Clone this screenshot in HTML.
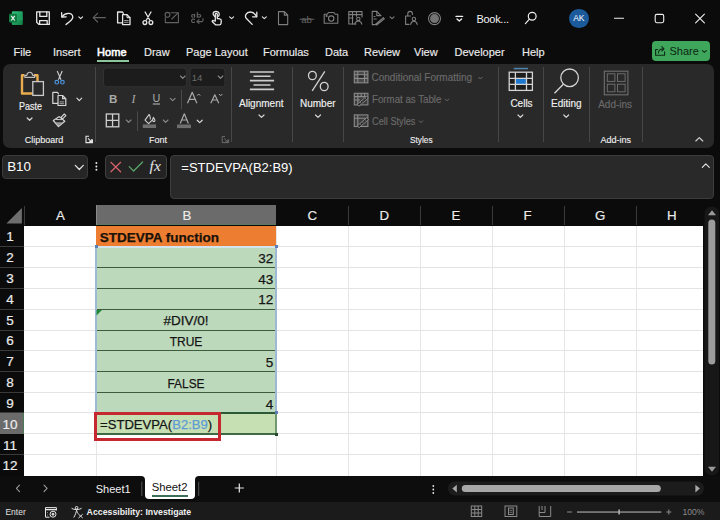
<!DOCTYPE html>
<html><head><meta charset="utf-8">
<style>
*{margin:0;padding:0;box-sizing:border-box}
html,body{width:720px;height:520px;overflow:hidden;background:#0b0b0b;font-family:"Liberation Sans",sans-serif;color:#fff}
.a{position:absolute}
.t{position:absolute;white-space:nowrap;line-height:1}
svg{position:absolute;overflow:visible}
#ribbon{left:3px;top:64px;width:711px;height:84px;background:#292929;border-radius:7px}
.sep{position:absolute;width:1px;background:#474747}
.tab{font-size:11px;color:#ececec;top:47px;-webkit-text-stroke:0.15px currentColor}
.lbl{font-size:10px;color:#f0f0f0;-webkit-text-stroke:0.15px currentColor}
.glb{font-size:9px;color:#f0f0f0;-webkit-text-stroke:0.12px currentColor}
.dim{color:#6b6b6b}
.ch{position:absolute;top:209.2px;font-size:13.3px;color:#ececec;line-height:1;-webkit-text-stroke:0.15px currentColor}
.rh{position:absolute;font-size:13.5px;color:#ececec;line-height:1;-webkit-text-stroke:0.2px currentColor}
.hsep{position:absolute;top:206px;height:19px;width:1px;background:#3a3a3a}
.gl{position:absolute;height:1px;background:#e4e4e4}
.vg{position:absolute;width:1px;background:#e6e6e6;top:226px;height:250px}
.rsep{position:absolute;left:0;width:24px;height:1px;background:#3a3a3a}
.cell{position:absolute;font-size:13.5px;color:#141414;line-height:1;white-space:nowrap;-webkit-text-stroke:0.25px currentColor}
.gline{position:absolute;left:96px;width:180px;height:1px;background:#3d5c3d}
</style></head><body>

<!-- ===== title bar ===== -->
<svg style="left:0;top:0" width="720" height="40" viewBox="0 0 720 40">
<defs><linearGradient id="xg" x1="0" y1="0" x2="1" y2="1"><stop offset="0" stop-color="#33c481"/><stop offset="1" stop-color="#107c41"/></linearGradient></defs>
<!-- excel logo -->
<rect x="11.8" y="11.3" width="11" height="13.6" rx="1.2" fill="url(#xg)"/>
<rect x="11.8" y="16.5" width="11" height="3.5" fill="#21a366" opacity="0.6"/>
<rect x="9" y="13.8" width="8" height="8.7" rx="1" fill="#107c41"/>
<path d="M11.2 15.8 L14.8 20.5 M14.8 15.8 L11.2 20.5" stroke="#e8f5ee" stroke-width="1.2"/>
<g fill="none" stroke="#e8e8e8" stroke-width="1.3" stroke-linejoin="round" stroke-linecap="round">
<!-- save -->
<path d="M36.7 11.9 H49.3 V24.4 H38.8 L36.7 22.3 Z"/>
<path d="M39.8 12 V16.4 H46.8 V12"/>
<path d="M39.6 24.3 V20.6 H47.2 V24.3"/>
<!-- undo -->
<path d="M61.8 17 L61.6 12.6 M61.8 17 L66.2 16.8"/>
<path d="M62 16.8 C64.5 13 72.8 11.5 72.8 17.2 C72.8 19.5 70 21.5 66 24.5"/>
<path d="M78.8 16.8 L80.7 18.6 L82.6 16.8" stroke-width="1.1"/>
<!-- copy -->
<path d="M122.3 22.9 H117.6 V12 H122.5 L123.3 13.4"/>
<path d="M122.6 14.7 H127 L130 17.7 V24.6 H122.6 Z"/>
<path d="M127 14.7 V17.7 H130" stroke-width="1"/>
<path d="M124.5 20.5 H128.2 M124.5 22.3 H128.2" stroke="#9a9a9a" stroke-width="1"/>
<!-- scissors -->
<path d="M145.1 12 L149.7 20 M151 12 L146.4 20"/>
<circle cx="144.9" cy="22.6" r="1.9"/>
<circle cx="150.9" cy="22.6" r="1.9"/>
<!-- hand -->
<path d="M214.5 16.2 C212 14 213 11.5 216 11.5 C219.2 11.5 220 14 218.6 16.2"/>
<path d="M215.3 21 V14.3 C215.3 13 217.3 13 217.3 14.3 V18.5 L219.8 18.8 C221 19 221.4 19.8 221.3 21 L221 23.6 C220.8 24.5 220.2 24.8 219.4 24.8 H215.5 L212.4 21.8 C211.8 21 212.6 20 213.5 20.6 Z"/>
<path d="M229.6 16.8 L231.6 18.6 L233.6 16.8" stroke-width="1.1"/>
<!-- redo -->
<path d="M252.2 24.4 L246.2 18.3 C244.5 16.3 246 12 250.3 12 C253 12 255 13.8 256.5 16.5"/>
<path d="M256.8 12.2 V16.8 H252.6"/>
<path d="M262.3 16.8 L264.3 18.6 L266.3 16.8" stroke-width="1.1"/>
<!-- customize -->
<path d="M456 16.4 H462.6" stroke="#f0f0f0"/>
<path d="M457 19 L459.3 21 L461.6 19" stroke="#f0f0f0"/>
<!-- search -->
<circle cx="532.2" cy="16.3" r="3.9" stroke="#f0f0f0" stroke-width="1.2"/>
<path d="M529.4 19.2 L525.4 23.6" stroke="#f0f0f0" stroke-width="1.2"/>
<!-- window controls -->
<path d="M614.5 18.2 H623.5" stroke="#f0f0f0" stroke-width="1.1"/>
<rect x="655.2" y="14.4" width="8.5" height="8.3" rx="1.6" stroke="#f0f0f0" stroke-width="1.1"/>
<path d="M695.6 14.2 L704.4 22.8 M704.4 14.2 L695.6 22.8" stroke="#f0f0f0" stroke-width="1.1"/>
</g>
<g fill="none" stroke="#626262" stroke-width="1.1" stroke-linejoin="round" stroke-linecap="round">
<!-- back arrow -->
<path d="M93.2 17.6 H105.4 M97.6 13.3 L93.2 17.6 L97.6 22"/>
<!-- mail -->
<path d="M171 12.7 H178.4 V22.6 H165.3 V17.5"/>
<path d="M171.8 19 L177.8 13.2"/>
<circle cx="167.5" cy="14.8" r="2.4"/>
<!-- abc -->
<path d="M193 17.1 C191.2 17.3 191.2 14.6 193 14.5 C194.4 14.5 194.6 15.3 194.6 16 V17.3 M194.6 15.7 V14.2"/>
<path d="M197.3 12.4 V17.3 M197.3 15.8 C197.5 14 200.8 14 200.8 15.8 C200.8 17.6 197.5 17.6 197.3 15.8"/>
<path d="M194.6 19.5 C193.5 18.6 191.6 19 191.6 20.8 C191.6 22.6 193.5 23 194.6 22"/>
<path d="M203 18.5 V20.2 C203 21 202.4 21.6 201.6 21.6 H197 M199 19.6 L196.9 21.6 L199 23.4"/>
<!-- strikethrough -->
<path d="M300 19.3 H313.9"/>
</g>
<g fill="none" stroke="#7e7e7e" stroke-width="1.1" stroke-linejoin="round" stroke-linecap="round">
<!-- new doc -->
<path d="M278.5 11.6 H284.4 L287.7 15 V24.6 H278.5 Z M284.3 11.8 V15.1 H287.5"/>
<!-- camera -->
<path d="M324.2 14.3 H327 L328.6 12.5 H333.8 L335.4 14.3 H337.8 V23.2 H324.2 Z"/>
<circle cx="331.2" cy="18.6" r="2.7"/>
<circle cx="326.6" cy="16" r="0.5" fill="#8e8e8e"/>
<!-- grid person -->
<path d="M356 24 H348.8 V11.6 H362 V17"/>
<path d="M348.8 14.6 H362 M352.5 11.6 V24 M348.8 18 H353 M356.5 11.6 V16.3"/>
<circle cx="358.3" cy="18.9" r="1.7"/>
<path d="M354.8 24.2 C355.3 22 356.5 21 358.3 21 C360.1 21 361.4 22 361.8 24.2"/>
<!-- doc pen -->
<path d="M372.2 11.4 H376.8 L380.8 15.6 M372.2 11.4 V24.6 H375"/>
<path d="M376.8 11.4 V15.6 H380.8"/>
<path d="M375.4 24.5 L383.3 17.7 L384.3 18.8 L376.6 25 Z"/>
<path d="M374.1 16.5 H375 M374 19 H376.3" />
<path d="M390 16.8 L392 18.6 L394 16.8" stroke-width="1.1"/>
<!-- lock person -->
<path d="M407.8 15.7 V13.8 C407.8 10.6 412.4 10.6 412.4 13.8 V14.6"/>
<path d="M409 24.4 H405.6 V16 H410.5"/>
<circle cx="413.9" cy="19" r="1.7"/>
<path d="M410.7 24.4 C411 22.3 412.2 21.3 413.9 21.3 C415.6 21.3 416.8 22.3 417.2 24.4"/>
<!-- record circle -->
<circle cx="434.5" cy="18.6" r="6"/>
</g>
<circle cx="434.5" cy="18.6" r="4.5" fill="#737373"/>
<text x="301.2" y="22.5" font-family="Liberation Sans" font-size="9.6" fill="#666">ab</text>
</svg>

<div class="t" style="left:476.5px;top:14px;font-size:11px;color:#f2f2f2;letter-spacing:-0.3px">Book...</div>
<div class="a" style="left:569px;top:8.5px;width:19.5px;height:19.5px;border-radius:50%;background:#1b5a9b"></div>
<div class="t" style="left:573.2px;top:14.3px;font-size:8.5px;color:#fff">AK</div>

<!-- ===== tabs ===== -->
<div class="t tab" style="left:13.5px">File</div>
<div class="t tab" style="left:53px">Insert</div>
<div class="t tab" style="left:97px;color:#fff;-webkit-text-stroke:0.55px #fff;letter-spacing:0.1px">Home</div>
<div class="a" style="left:97px;top:59.5px;width:32px;height:2px;background:#8dc59c"></div>
<div class="t tab" style="left:144px">Draw</div>
<div class="t tab" style="left:186px">Page Layout</div>
<div class="t tab" style="left:263px">Formulas</div>
<div class="t tab" style="left:325px">Data</div>
<div class="t tab" style="left:364px">Review</div>
<div class="t tab" style="left:414px">View</div>
<div class="t tab" style="left:454.5px">Developer</div>
<div class="t tab" style="left:522px">Help</div>
<div class="a" style="left:652px;top:41px;width:58px;height:19.5px;background:#3fa75b;border-radius:4px"></div>
<div class="t" style="left:669.5px;top:45.7px;font-size:11px;color:#0b2513">Share</div>

<!-- ===== ribbon ===== -->
<div class="a" id="ribbon"></div>
<div class="sep" style="left:95px;top:67px;height:75px"></div>
<div class="sep" style="left:231px;top:67px;height:75px"></div>
<div class="sep" style="left:292px;top:67px;height:75px"></div>
<div class="sep" style="left:343px;top:67px;height:75px"></div>
<div class="sep" style="left:498px;top:67px;height:75px"></div>
<div class="sep" style="left:543px;top:67px;height:75px"></div>
<div class="sep" style="left:589px;top:67px;height:75px"></div>
<div class="sep" style="left:642px;top:67px;height:75px"></div>

<svg style="left:0;top:60px" width="720" height="90" viewBox="0 60 720 90">
<!-- paste clipboard -->
<path d="M24.5 75.2 H22 V93.5 H33" fill="none" stroke="#e9ac4f" stroke-width="2.4" stroke-linejoin="round"/>
<path d="M34 75.2 H37.5 V81" fill="none" stroke="#e9ac4f" stroke-width="2.4" stroke-linejoin="round"/>
<path d="M24.8 77.3 V75.3 H26.8 C27.3 71.2 32.2 71.2 32.7 75.3 H34.7 V77.3 Z" fill="none" stroke="#bdbdbd" stroke-width="1.2" stroke-linejoin="round"/>
<rect x="32.8" y="81.6" width="10.6" height="13.8" fill="#292929" stroke="#c9c9c9" stroke-width="1.3"/>
<!-- scissors -->
<path d="M57.2 71 L61 79.8 M62.2 71 L58.4 79.8" stroke="#d0d0d0" stroke-width="1.1" fill="none"/>
<circle cx="56.8" cy="82.2" r="1.8" fill="none" stroke="#4c94dc" stroke-width="1.2"/>
<circle cx="62.4" cy="82.2" r="1.8" fill="none" stroke="#4c94dc" stroke-width="1.2"/>
<g fill="none" stroke="#d6d6d6" stroke-width="1.2" stroke-linejoin="round" stroke-linecap="round">
<!-- copy -->
<path d="M57.6 103.4 H52.8 V92.4 H57.5 L58.5 93.8"/>
<path d="M58 95.5 H62.6 L65.8 98.7 V105.5 H58 Z M62.6 95.5 V98.7 H65.8"/>
<path d="M60 101.8 H63.6 M60 103.6 H63.6" stroke="#8a8a8a"/>
<!-- format painter -->
<path d="M64.3 114 L65.9 115.6 L62.6 118.9 L61 117.3 Z" stroke-width="1.1"/>
<path d="M53.3 120.5 L59.3 116.6 L64.8 121.3 L58.5 126.5 Z"/>
<path d="M55.3 122.2 L58.6 125.6 L62.6 122.2 Z" fill="#9a9a9a" stroke="none"/>
<path d="M56.3 119.5 L61.8 119.6" stroke-width="0.9"/>
<!-- chevrons (bright) -->
<path d="M27.2 118 L29.6 120.3 L32 118"/>
<path d="M76.9 98.2 L79.3 100.6 L81.7 98.2"/>
<path d="M197.2 120.2 L199.7 122.6 L202.2 120.2"/>
<path d="M259 115 L261.5 117.4 L264 115"/>
<path d="M315.5 115 L318 117.4 L320.5 115"/>
<path d="M518 115 L520.4 117.4 L522.8 115"/>
<path d="M563.8 115 L566.2 117.4 L568.6 115"/>
<path d="M695.8 141 L699.3 137.6 L702.8 141" stroke-width="1.1"/>
</g>
<!-- clipboard dialog launcher -->
<g fill="none" stroke="#e6e6e6" stroke-width="1.1">
<path d="M89 136.3 H86 V142.6 H92.4 V139.6"/>
<path d="M88 138.3 L91.6 141.8 M91.8 139 V141.8 H89"/>
</g>
<!-- font boxes -->
<rect x="103.5" y="68" width="83.2" height="18.8" rx="3" fill="#1c1c1c" stroke="#333" stroke-width="1"/>
<rect x="190" y="68" width="35" height="18.8" rx="3" fill="#1c1c1c" stroke="#333" stroke-width="1"/>
<g fill="none" stroke="#8a8a8a" stroke-width="1.1" stroke-linejoin="round" stroke-linecap="round">
<path d="M180.5 76 L182.8 78.3 L185.1 76"/>
<path d="M218.2 76 L220.5 78.3 L222.8 76"/>
<path d="M170.3 98.3 L172.7 100.7 L175.1 98.3"/>
<path d="M126.3 120 L128.6 122.4 L131 120"/>
<path d="M163.3 120 L165.6 122.4 L168 120"/>
</g>
<text x="191.8" y="81" font-family="Liberation Sans" font-size="9.5" fill="#6c6c6c">14</text>
<!-- B I U -->
<text x="109" y="102.7" font-family="Liberation Sans" font-weight="bold" font-size="11.6" fill="#a9a9a9">B</text>
<text x="131.6" y="102.7" font-family="Liberation Serif" font-style="italic" font-size="12" fill="#a9a9a9">I</text>
<text x="152.6" y="102" font-family="Liberation Sans" font-size="10.8" fill="#a9a9a9">U</text>
<path d="M152.8 104 H160" stroke="#a9a9a9" stroke-width="1.2"/>
<!-- separators small -->
<rect x="181" y="89.5" width="1" height="19.7" fill="#4a4a4a"/>
<rect x="137" y="111.3" width="1" height="19.7" fill="#4a4a4a"/>
<!-- grow / shrink font -->
<g fill="none" stroke="#a9a9a9" stroke-width="1.2" stroke-linejoin="round">
<path d="M187.5 103.3 L192.2 92.3 L196.9 103.3 M189.2 99.4 H195.2"/>
<path d="M197.2 95.6 L198.7 94 L200.2 95.6" stroke-width="1"/>
<path d="M210.8 103.3 L214.8 94.8 L218.8 103.3 M212.2 100 H217.4"/>
<path d="M219 94 L220.7 95.8 L222.4 94" stroke-width="1"/>
<!-- font color A -->
<path d="M180.2 123.4 L184.3 113.8 L188.4 123.4 M181.7 120 H186.9"/>
</g>
<rect x="177" y="124.5" width="14" height="3.6" fill="#6e6e6e"/>
<!-- borders grid -->
<g fill="none" stroke="#cfcfcf" stroke-width="1.3">
<rect x="106.3" y="114" width="12.5" height="12.8"/>
<path d="M112.55 114 V126.8 M106.3 120.4 H118.8"/>
</g>
<!-- fill bucket -->
<g fill="none" stroke="#cfcfcf" stroke-width="1.1" stroke-linejoin="round">
<path d="M149.2 114.4 L145 120.1 L148.6 123.7 L153 119.4"/>
<path d="M149.2 114.4 C150 115.5 150.4 117.5 150.4 119.6"/>
<path d="M153.3 117.4 C152.5 119 152.3 121.6 153.9 121.8 C155.4 121.8 155.2 119 153.3 117.4Z"/>
</g>
<rect x="142.8" y="124.4" width="13.3" height="3.6" fill="#6e6e6e"/>
<!-- font dialog launcher dim -->
<g fill="none" stroke="#6a6a6a" stroke-width="1">
<path d="M225 136.5 H222.2 V142.6 H228.6 V139.8"/>
<path d="M224.2 138.5 L227.8 142 M228 139.2 V142 H225.2"/>
</g>
<!-- alignment -->
<g stroke="#cdcdcd" stroke-width="1.6">
<path d="M249.9 72 H274.1 M253.5 76.3 H270.5 M249.9 80.6 H274.1 M253.5 85 H270.5 M249.9 89.4 H274.1"/>
</g>
<!-- percent -->
<g fill="none" stroke="#d2d2d2" stroke-width="1.3">
<ellipse cx="312.4" cy="75.5" rx="3.9" ry="4.2"/>
<ellipse cx="324.2" cy="86.5" rx="3.9" ry="4.2"/>
<path d="M324.8 71.3 L312.2 90.8"/>
</g>
<!-- styles icons (dim) -->
<g fill="none" stroke="#8a8a8a" stroke-width="1.1">
<rect x="354.3" y="71.2" width="13.6" height="11.6" fill="#4a4a4a"/>
<rect x="357.8" y="74.8" width="6.6" height="3.6" fill="#1e1e1e" stroke="none"/>
<path d="M354.3 74.8 H367.9 M354.3 78.4 H367.9 M357.8 71.2 V82.8 M364.4 71.2 V82.8"/>
<rect x="354.3" y="93.3" width="13.6" height="11.6" fill="#3c3c3c"/>
<path d="M354.3 96.6 H367.9 M357.8 93.3 V104.9 M361.2 93.3 V97 M364.6 93.3 V97 M354.3 100 H360" />
<path d="M357.2 104.4 L366.6 96.1 L368.4 98 L359.2 106 Z" fill="#262626" stroke-width="1"/>
<path d="M360 103 L361 102.2 M362.4 101 L363.4 100.2 M364.8 99 L365.8 98.2" stroke-width="0.9"/>
<rect x="354.3" y="114.9" width="13.6" height="11.6" fill="#3c3c3c"/>
<path d="M354.3 118.2 H367.9 M357.8 114.9 V126.5"/>
<path d="M357.2 126 L366.6 117.7 L368.4 119.6 L359.2 127.6 Z" fill="#262626" stroke-width="1"/>
<path d="M360 124.6 L361 123.8 M362.4 122.6 L363.4 121.8 M364.8 120.6 L365.8 119.8" stroke-width="0.9"/>
</g>
<g fill="none" stroke="#6e6e6e" stroke-width="1" stroke-linejoin="round">
<path d="M478.4 77 L480.4 79 L482.4 77"/>
<path d="M445 98.8 L447 100.8 L449 98.8"/>
<path d="M419 120.6 L421 122.6 L423 120.6"/>
</g>
<!-- cells -->
<rect x="513.8" y="67.8" width="14.2" height="1.5" fill="#4f86b0"/>
<rect x="509.2" y="72.2" width="23.2" height="18.2" fill="#1d1d1d"/>
<rect x="515.4" y="78.3" width="11.1" height="6" fill="#1d78cf"/>
<g fill="none" stroke="#d4d4d4" stroke-width="1.3">
<rect x="509.2" y="72.2" width="23.2" height="18.2"/>
<path d="M515.4 72.2 V90.4 M526.5 72.2 V90.4 M509.2 78.3 H532.4 M509.2 84.3 H532.4"/>
</g>
<!-- editing magnifier -->
<g fill="none" stroke="#d4d4d4" stroke-width="1.3">
<circle cx="569.6" cy="77.8" r="8.8"/>
<path d="M563.3 84.3 L554.5 93.2"/>
</g>
<!-- add-ins -->
<g fill="none" stroke="#6f6f6f" stroke-width="1.1">
<rect x="604.3" y="71.2" width="23.6" height="23.6"/>
<rect x="607.3" y="73.8" width="7.6" height="7.6" stroke-width="0.95"/>
<rect x="617.5" y="73.8" width="7.6" height="7.6" stroke-width="0.95"/>
<rect x="607.3" y="84.2" width="7.6" height="7.6" stroke-width="0.95"/>
<rect x="617.5" y="84.2" width="7.6" height="7.6" stroke-width="0.95"/>
</g>
</svg>

<div class="t lbl" style="left:18.75px;top:102px;transform:scaleX(0.9);transform-origin:0 0">Paste</div>
<div class="t glb" style="left:24.7px;top:135.6px">Clipboard</div>
<div class="t glb" style="left:148.9px;top:135.6px">Font</div>
<div class="t lbl" style="left:239px;top:99.3px">Alignment</div>
<div class="t lbl" style="left:300px;top:99.3px">Number</div>
<div class="t lbl dim" style="left:371.5px;top:73px">Conditional Formatting</div>
<div class="t lbl dim" style="left:371.5px;top:95px;transform:scaleX(0.97);transform-origin:0 0">Format as Table</div>
<div class="t lbl dim" style="left:371.5px;top:116.6px;transform:scaleX(0.92);transform-origin:0 0">Cell Styles</div>
<div class="t glb" style="left:409.7px;top:135.6px;transform:scaleX(0.92);transform-origin:0 0">Styles</div>
<div class="t lbl" style="left:510.4px;top:98.8px">Cells</div>
<div class="t lbl" style="left:551px;top:98.8px">Editing</div>
<div class="t lbl dim" style="left:598.2px;top:100.2px">Add-ins</div>
<div class="t glb" style="left:600.4px;top:135.6px">Add-ins</div>

<!-- ===== formula bar ===== -->
<div class="a" style="left:2px;top:155px;width:86px;height:24px;background:#262626;border:1px solid #3a3a3a;border-radius:4px"></div>
<div class="t" style="left:7.2px;top:160.2px;font-size:13.4px;color:#fff">B10</div>
<div class="a" style="left:105px;top:155px;width:62px;height:24px;background:#232323;border:1px solid #404040;border-radius:4px"></div>
<div class="a" style="left:170px;top:155px;width:544px;height:44px;background:#292929;border:1px solid #3d3d3d;border-radius:4px"></div>
<div class="t" style="left:181.3px;top:161.4px;font-size:13px;color:#fff">=STDEVPA(B2:B9)</div>
<svg style="left:0;top:150px" width="720" height="55" viewBox="0 150 720 55">
<g fill="none" stroke-linecap="round" stroke-linejoin="round">
<path d="M75.3 165.3 L79.3 169.5 L83.3 165.3" stroke="#e6e6e6" stroke-width="1.2"/>
<path d="M110.9 162.3 L120.6 171.8 M120.6 162.3 L110.9 171.8" stroke="#d9636a" stroke-width="1.2"/>
<path d="M129.2 166.6 L133.6 171 L142.6 162" stroke="#5aa86a" stroke-width="1.2"/>
<path d="M702.3 167.4 L705.8 163.8 L709.3 167.4" stroke="#e6e6e6" stroke-width="1.1"/>
</g>
<circle cx="96.4" cy="163.1" r="1" fill="#e6e6e6"/>
<circle cx="96.4" cy="166.4" r="1" fill="#e6e6e6"/>
<circle cx="96.4" cy="169.8" r="1" fill="#e6e6e6"/>
<text x="149.6" y="171" font-family="Liberation Serif" font-style="italic" font-size="15.5" fill="#e6e6e6">fx</text>
</svg>


<!-- ===== headers ===== -->
<div class="a" style="left:96px;top:205px;width:180px;height:20px;background:#6b6b6b"></div>
<div class="a" style="left:96px;top:224.3px;width:180px;height:1px;background:#5d7a60"></div>
<div class="a" style="left:96px;top:205px;width:1px;height:20px;background:#8a8a8a"></div>
<div class="hsep" style="left:24px"></div>
<svg style="left:0;top:200px" width="30" height="30" viewBox="0 200 30 30"><path d="M6.4 223.5 H21.9 V208 Z" fill="#6e6e6e"/></svg>
<div class="hsep" style="left:348px"></div>
<div class="hsep" style="left:420px"></div>
<div class="hsep" style="left:492px"></div>
<div class="hsep" style="left:564px"></div>
<div class="hsep" style="left:636px"></div>
<div class="ch" style="left:56px">A</div>
<div class="ch" style="left:182.6px">B</div>
<div class="ch" style="left:307.5px">C</div>
<div class="ch" style="left:379.5px">D</div>
<div class="ch" style="left:451.5px">E</div>
<div class="ch" style="left:523.5px">F</div>
<div class="ch" style="left:595px">G</div>
<div class="ch" style="left:667px">H</div>

<!-- ===== grid ===== -->
<div class="a" style="left:24px;top:226px;width:679px;height:250px;background:#fff"></div>
<div class="gl" style="left:24px;top:246px;width:679px"></div>
<div class="gl" style="left:24px;top:267px;width:679px"></div>
<div class="gl" style="left:24px;top:288px;width:679px"></div>
<div class="gl" style="left:24px;top:309px;width:679px"></div>
<div class="gl" style="left:24px;top:330px;width:679px"></div>
<div class="gl" style="left:24px;top:350px;width:679px"></div>
<div class="gl" style="left:24px;top:371px;width:679px"></div>
<div class="gl" style="left:24px;top:392px;width:679px"></div>
<div class="gl" style="left:24px;top:412px;width:679px"></div>
<div class="gl" style="left:24px;top:433px;width:679px"></div>
<div class="gl" style="left:24px;top:454px;width:679px"></div>
<div class="vg" style="left:96px"></div>
<div class="vg" style="left:276px"></div>
<div class="vg" style="left:348px"></div>
<div class="vg" style="left:420px"></div>
<div class="vg" style="left:492px"></div>
<div class="vg" style="left:564px"></div>
<div class="vg" style="left:636px"></div>
<div class="rsep" style="top:246px"></div>
<div class="rsep" style="top:267px"></div>
<div class="rsep" style="top:288px"></div>
<div class="rsep" style="top:309px"></div>
<div class="rsep" style="top:330px"></div>
<div class="rsep" style="top:350px"></div>
<div class="rsep" style="top:371px"></div>
<div class="rsep" style="top:392px"></div>
<div class="rsep" style="top:412px"></div>
<div class="rsep" style="top:433px"></div>
<div class="rsep" style="top:454px"></div>
<div class="a" style="left:0;top:412.5px;width:24px;height:21px;background:#6b6b6b"></div>
<div class="a" style="left:23px;top:412.5px;width:1px;height:21px;background:#4a7a55"></div>
<div class="rh" style="left:0;width:20px;text-align:center;top:230.3px">1</div>
<div class="rh" style="left:0;width:20px;text-align:center;top:251.1px">2</div>
<div class="rh" style="left:0;width:20px;text-align:center;top:271.9px">3</div>
<div class="rh" style="left:0;width:20px;text-align:center;top:292.8px">4</div>
<div class="rh" style="left:0;width:20px;text-align:center;top:313.6px">5</div>
<div class="rh" style="left:0;width:20px;text-align:center;top:334.4px">6</div>
<div class="rh" style="left:0;width:20px;text-align:center;top:355.2px">7</div>
<div class="rh" style="left:0;width:20px;text-align:center;top:376.1px">8</div>
<div class="rh" style="left:0;width:20px;text-align:center;top:396.9px">9</div>
<div class="rh" style="left:0;width:20px;text-align:center;top:417.7px">10</div>
<div class="rh" style="left:0;width:20px;text-align:center;top:438.6px">11</div>
<div class="rh" style="left:0;width:20px;text-align:center;top:459.4px">12</div>
<div class="a" style="left:96px;top:226px;width:180px;height:20.3px;background:#ed7d31"></div>
<div class="a" style="left:96px;top:246px;width:180px;height:166px;background:#bdd9bb"></div>
<div class="a" style="left:96px;top:412.5px;width:180px;height:21.5px;background:#c6e0b4"></div>
<div class="gline" style="top:267px"></div>
<div class="gline" style="top:288px"></div>
<div class="gline" style="top:309px"></div>
<div class="gline" style="top:330px"></div>
<div class="gline" style="top:350px"></div>
<div class="gline" style="top:371px"></div>
<div class="gline" style="top:392px"></div>
<div class="a" style="left:96px;top:412px;width:180px;height:1.5px;background:#2d5a36"></div>
<div class="a" style="left:96px;top:433px;width:181px;height:1.8px;background:#3d6a44"></div>
<div class="a" style="left:275px;top:412px;width:1.5px;height:22px;background:#6f9a70"></div>
<div class="a" style="left:95px;top:246px;width:2px;height:166px;background:#9db9d3"></div>
<div class="a" style="left:275px;top:246px;width:2px;height:166px;background:#9db9d3"></div>
<div class="a" style="left:96px;top:246.3px;width:180px;height:1.3px;background:#d2e4ee"></div>
<div class="a" style="left:94.5px;top:245px;width:3px;height:3px;background:#5b7fb5"></div>
<div class="a" style="left:274.5px;top:245px;width:3px;height:3px;background:#5b7fb5"></div>
<div class="a" style="left:274.5px;top:411px;width:3px;height:3px;background:#5b7fb5"></div>
<div class="a" style="left:274.5px;top:432.5px;width:3px;height:3px;background:#2a4a2e"></div>
<svg style="left:96px;top:309px" width="6" height="6"><path d="M0.5 1 L6 1 L0.5 6.5Z" fill="#1f8a3c"/></svg>
<div class="cell" style="left:99.7px;top:230.87px;font-weight:bold;color:#1a1208">STDEVPA function</div>
<div class="cell" style="right:446.7px;top:251.70px">32</div>
<div class="cell" style="right:446.7px;top:272.53px">43</div>
<div class="cell" style="right:446.7px;top:293.36px">12</div>
<div class="cell" style="right:446.7px;top:355.85px">5</div>
<div class="cell" style="right:446.7px;top:397.51px">4</div>
<div class="cell" style="left:96px;width:180px;text-align:center;top:314.19px;transform:scaleX(1.0)">#DIV/0!</div>
<div class="cell" style="left:96px;width:180px;text-align:center;top:335.02px;transform:scaleX(0.89)">TRUE</div>
<div class="cell" style="left:96px;width:180px;text-align:center;top:376.68px;transform:scaleX(0.88)">FALSE</div>
<div class="cell" style="left:99.5px;top:418.34px;transform:scaleX(0.97);transform-origin:0 0">=STDEVPA(<span style="color:#5e9bd6">B2:B9</span>)</div>
<div class="a" style="left:94px;top:412px;width:127px;height:29px;border:3px solid #c5282f"></div>

<!-- ===== tab bar & status ===== -->
<div class="a" style="left:0;top:501.5px;width:720px;height:19px;background:#1b1b1b"></div>
<div class="a" style="left:138px;top:476px;width:64px;height:6px;background:#fff"></div>
<div class="a" style="left:0;top:476px;width:144.6px;height:25.5px;background:#0d0d0d;border-top-right-radius:4px"></div>
<div class="a" style="left:195.4px;top:476px;width:524.6px;height:25.5px;background:#0d0d0d;border-top-left-radius:4px"></div>
<div class="a" style="left:144.6px;top:476px;width:50.8px;height:22.8px;background:#fff;border-radius:0 0 4px 4px"></div>
<div class="t" style="left:95.7px;top:484.2px;font-size:11px;color:#f0f0f0">Sheet1</div>
<div class="t" style="left:151.7px;top:481.9px;font-size:11.3px;color:#111">Sheet2</div>
<div class="a" style="left:152px;top:495.2px;width:36.2px;height:1.6px;background:#3d6e58"></div>
<div class="t" style="left:5.4px;top:507.9px;font-size:8.5px;color:#e0e0e0">Enter</div>
<div class="t" style="left:86.6px;top:507.6px;font-size:8.75px;font-weight:bold;color:#f0f0f0">Accessibility: Investigate</div>
<div class="t" style="left:682.5px;top:507.7px;font-size:8.6px;color:#8a8a8a">100%</div>
<!-- share icon/chevron -->
<svg style="left:0;top:0" width="720" height="520" viewBox="0 0 720 520">
<g fill="none" stroke="#0e2a17" stroke-width="1.1" stroke-linejoin="round" stroke-linecap="round">
<path d="M657.5 49.5 H655.6 V55.3 H664.6 V51.8"/>
<path d="M658.4 53 C658.6 50.2 660.5 48.8 663.6 48.8 M661.8 46.6 L664 48.8 L661.8 51"/>
<path d="M702.4 50.6 L704.4 52.3 L706.4 50.6"/>
</g>
<!-- vertical scrollbar -->
<rect x="704.5" y="206.5" width="14.5" height="269" rx="7" fill="#171717"/>
<path d="M708 215.2 L712 210.2 L716 215.2 Z" fill="#9a9a9a"/>
<rect x="708.3" y="219.6" width="7" height="145" rx="3.5" fill="#9c9c9c"/>
<path d="M708 466.8 L712 471.8 L716 466.8 Z" fill="#9a9a9a"/>
<!-- tab bar -->
<g fill="none" stroke="#9a9a9a" stroke-width="1.1" stroke-linejoin="round" stroke-linecap="round">
<path d="M19.5 485.2 L16.4 488.4 L19.5 491.6"/>
<path d="M44 485.2 L47.1 488.4 L44 491.6"/>
</g>
<path d="M234.8 488 H243.8 M239.3 483.5 V492.5" stroke="#e6e6e6" stroke-width="1.2"/>
<rect x="141.3" y="481.7" width="1" height="14.3" fill="#555"/>
<rect x="198.2" y="481.7" width="1" height="14.3" fill="#555"/>
<circle cx="433.3" cy="486" r="0.9" fill="#e6e6e6"/>
<circle cx="433.3" cy="489.5" r="0.9" fill="#e6e6e6"/>
<circle cx="433.3" cy="493" r="0.9" fill="#e6e6e6"/>
<rect x="448" y="481.5" width="256" height="14" rx="7" fill="#1c1c1c"/>
<path d="M456.8 484.8 L452.3 488.6 L456.8 492.4 Z" fill="#a8a8a8"/>
<rect x="461.8" y="485.1" width="199" height="7" rx="3.5" fill="#a8a8a8"/>
<path d="M695.4 484.8 L699.9 488.6 L695.4 492.4 Z" fill="#a8a8a8"/>
<!-- status icons -->
<g fill="none" stroke="#e6e6e6" stroke-width="1" stroke-linejoin="round">
<path d="M49.5 517.2 H45.5 V507.6 H56.4 V510.5"/>
<path d="M45.5 509.6 H56.4" stroke-width="1.4"/>
<path d="M47.5 512.5 V513 M47.5 514.8 V515.3"/>
<circle cx="53" cy="514.2" r="3"/>
<circle cx="53" cy="514.2" r="1" fill="#e6e6e6"/>
<circle cx="76.6" cy="507.8" r="1.3"/>
<path d="M71.6 508.3 C73.5 510 79.5 510 81.5 508.3 M76.6 510.2 C76 512.5 75.5 514.5 73.8 517.5 M76.6 510.2 C77.2 512 77.5 513 78.3 513.8"/>
<path d="M78.5 514.2 L82.7 518 M82.7 514.2 L78.5 518"/>
</g>
<g fill="none" stroke="#8a8a8a" stroke-width="1">
<rect x="471.3" y="506" width="10.4" height="10.5"/>
<path d="M474.8 506 V516.5 M478.2 506 V516.5 M471.3 509.5 H481.7 M471.3 513 H481.7"/>
<rect x="505" y="506" width="11.8" height="10.5"/>
<rect x="508.5" y="508" width="4.8" height="6.5"/>
<path d="M509.5 510.3 H512.3 M509.5 512.3 H512.3" stroke-width="0.8"/>
<path d="M539.2 506 V516.5 H550.7 V506 M539.2 512.5 H545 V506 M542 506 V510"/>
</g>
<g fill="none" stroke="#8a8a8a" stroke-width="1">
<path d="M567 512 H572"/>
<path d="M666.3 512 H671.3 M668.8 509.5 V514.5"/>
</g>
<rect x="577" y="511.4" width="84.3" height="1.3" fill="#9a9a9a"/>
<rect x="618.3" y="509.5" width="1.6" height="5" fill="#b0b0b0"/>
</svg>

</body></html>
